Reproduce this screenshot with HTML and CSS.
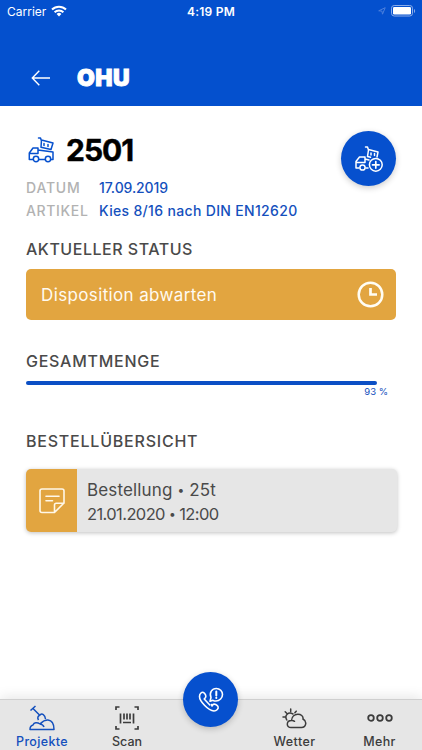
FILE: index.html
```html
<!DOCTYPE html>
<html lang="de">
<head>
<meta charset="utf-8">
<title>OHU</title>
<link rel="stylesheet" href="styles.css">
</head>
<body>
<div class="app">
  <header class="header">
    <div class="statusbar">
      <div class="carrier"><span>Carrier</span>
        <svg width="16" height="12" viewBox="0 0 16 12" fill="none" stroke="#fff" stroke-width="2"><path d="M1 4.500a10 10 0 0 1 14 0M3.600 7.200a6.300 6.300 0 0 1 8.800 0"/><path d="M5.600 9a3.500 3.500 0 0 1 4.800 0L8 11.500z" fill="#fff" stroke="none"/></svg>
      </div>
      <span class="time">4:19 PM</span>
      <div class="power">
        <svg width="8" height="8" viewBox="0 0 8 8" fill="none" stroke="#4c7fdc"><path d="M.7 3.800 7.200.7 4.500 7.200 3.900 4.100z"/></svg>
        <svg width="25" height="12" viewBox="0 0 25 12"><rect x=".5" y=".5" width="21" height="10.500" rx="2.700" fill="none" stroke="#8aacea"/><rect x="2" y="2" width="18" height="7.500" rx="1.300" fill="#fff"/><path d="M23 4v4c1.500-.7 1.500-3.300 0-4z" fill="#8aacea"/></svg>
      </div>
    </div>
    <div class="titlebar">
      <svg class="back" width="20" height="16" viewBox="0 0 20 16" fill="none" stroke="#fff" stroke-width="1.400"><path d="M19 8H1.300M8.300.8 1.300 8l7 7.200"/></svg>
      <span class="logo">OHU</span>
    </div>
  </header>

  <main class="content">
    <section class="summary">
      <div class="info">
        <div class="number">
          <svg width="27" height="26" viewBox="0 0 27 26" fill="none" stroke="#0650ce" stroke-width="1.500" stroke-linejoin="round" stroke-linecap="round"><path d="M10.500 1h2l1 3M13.500 3l11.500 3-2 6.500-10-2.200zM16 6.500v2M20 7.500v2M5 22.500H1.300V16L5 11h5v5.500H2M10 13l15 2v7.500h-2M11 22.500h6"/><circle cx="8" cy="22" r="2.700"/><circle cx="20" cy="22" r="2.700"/></svg>
          <h1>2501</h1>
        </div>
        <dl class="facts">
          <dt class="t-datum">DATUM</dt><dd class="t-date">17.09.2019</dd>
          <dt class="t-artikel">ARTIKEL</dt><dd class="t-kies">Kies 8/16 nach DIN EN12620</dd>
        </dl>
      </div>
      <button class="round add" aria-label="Bestellen">
        <svg width="28" height="26" viewBox="0 0 28 26" fill="none" stroke="#fff" stroke-width="1.500" stroke-linejoin="round" stroke-linecap="round"><path d="M10.500 1h2l1 3M13.500 3.500l9.500 2.500-1 5M13.500 4l-1 6.500 3 .8M16 7v2M19.500 7.500v2M4 22H1v-6.500L4.500 11H10v5.500H2M10 13l4 1M11 22h2"/><circle cx="7.500" cy="21.500" r="2.600"/><circle cx="20.800" cy="18.800" r="6.400"/><path d="M17.500 18.800h6.600M20.800 15.500v6.600" stroke-width="1.700"/></svg>
      </button>
    </section>

    <h2 class="h-status">AKTUELLER STATUS</h2>
    <div class="status"><span>Disposition abwarten</span>
      <svg width="27" height="27" viewBox="0 0 27 27" fill="none" stroke="#fffdf4"><circle cx="13.500" cy="13.500" r="11.800" stroke-width="2.500"/><path d="M13.500 7v6.500H20" stroke-width="2.700"/></svg>
    </div>

    <h2 class="h-total">GESAMTMENGE</h2>
    <div class="progress"><div class="bar" style="width:351px"></div></div>
    <div class="percent">93 %</div>

    <h2 class="h-orders">BESTELLÜBERSICHT</h2>
    <article class="order">
      <div class="note">
        <svg width="26" height="26" viewBox="0 0 26 26" fill="none" stroke="#fff8e8" stroke-width="1.600" stroke-linejoin="round" stroke-linecap="round"><path d="M15 24.500H3a2 2 0 0 1-2-2V3a2 2 0 0 1 2-2h20a2 2 0 0 1 2 2v12l-9.500 9.500V17a1.700 1.700 0 0 1 1.700-1.700H25M7 8.300h13M7 12.800h6.500"/></svg>
      </div>
      <div class="detail"><div class="t-order">Bestellung <i class="dot">•</i> 25t</div><div class="t-when">21.01.2020 <i class="dot">•</i> 12:00</div></div>
    </article>
  </main>

  <nav class="tabs">
    <a class="tab active">
      <svg width="26" height="26" viewBox="0 0 26 26" fill="none" stroke="currentColor" stroke-width="1.500" stroke-linejoin="round"><path d="M1 24.500h24c0-5-1-9-6-9.500-4-.3-6 2-8 4-3-2-6-1.500-7 1-2 .5-3 1.500-3 4.500zM11 19c2 .3 3.500 1.500 4 3M1.500 5.500 6.500 1M4 3.500l7 7M9.500 15c-1.500-2.500-.5-4 1.500-5 2-2 5-.5 5.500 4"/></svg>
      <span class="t-projekte">Projekte</span>
    </a>
    <a class="tab">
      <svg width="24" height="26" viewBox="0 0 24 26" fill="none" stroke="currentColor" stroke-width="1.700"><path d="M1 5V2h3.500M19.500 2H23v3M23 21v3h-3.500M4.500 24H1v-3M5.500 8.500v10M9 8.500v6M12 8.500v6M15 8.500v6M18.500 8.500v10M8 17.500h8"/></svg>
      <span class="t-scan">Scan</span>
    </a>
    <div class="call">
      <button class="round" aria-label="Anrufen">
        <svg width="26" height="26" viewBox="0 0 26 26" fill="none" stroke="#fff" stroke-width="1.600" stroke-linejoin="round" stroke-linecap="round"><path d="M13.500 17.500 14 19l1-1.500c1.500-1 4 .5 5 2 1 2-1.500 4.500-4 4.500C10 23.500 1.500 14 1.500 9.500c0-3 2.500-5 4-4 1.700 1 3 3.500 2 5L6.200 12l5.600 6"/><path d="M13 10.500c-2-5 1-9 5.300-9 3.500 0 6.200 2.700 6.200 6s-3 6.500-6.500 6.500c-1.300 0-2 0-3-.7l-3 1z"/><path d="M18.300 4.500v4M18.300 10.800v.1" stroke-width="2"/></svg>
      </button>
    </div>
    <a class="tab">
      <svg width="25" height="26" viewBox="0 0 25 26" fill="none" stroke="currentColor" stroke-width="1.500" stroke-linecap="round"><path d="M9 22.500c-5 0-5-7 .5-7C10 7 22 8 21 14c4.500 2.500 3 8.500-1.500 8.500H9M9.500 15.500c1-.2 2 0 3 .8M4.800 15C2 10 6.500 6.500 11 9M8.700 4v2.500M1 12h2.300M3.200 6.700l1.500 1.500M14.200 6.200l-1.300 1.600"/></svg>
      <span class="t-wetter">Wetter</span>
    </a>
    <a class="tab">
      <svg width="26" height="26" viewBox="0 0 26 26" fill="none" stroke="currentColor" stroke-width="1.800"><circle cx="4" cy="13" r="2.800"/><circle cx="13" cy="13" r="2.800"/><circle cx="22" cy="13" r="2.800"/></svg>
      <span class="t-mehr">Mehr</span>
    </a>
  </nav>
</div>
</body>
</html>
```
FILE: styles.css
```css
* { box-sizing: border-box; }
body { margin: 0; font-family: Inter, "Open Sans", sans-serif; background: #fff; color: #4a4a4a; }
svg { display: block; flex: none; }
.app { width: 422px; height: 750px; display: flex; flex-direction: column; overflow: hidden; }
.header { height: 106px; background: #0450ce; color: #fff; flex: none; }
.statusbar { height: 22px; padding: 0 7px; display: grid; grid-template-columns: 1fr auto 1fr; align-items: center; font-size: 12px; }
.carrier { display: flex; align-items: center; gap: 5px; }
.time { font-weight: 600; letter-spacing: .2px; }
.power { display: flex; align-items: center; justify-content: flex-end; gap: 5px; margin-right: -1px; }
.titlebar { display: flex; align-items: center; gap: 26px; padding: 41px 0 0 31px; height: 70px; }
.logo { font-size: 23px; line-height: 28px; font-weight: 900; letter-spacing: .5px; -webkit-text-stroke: .9px #fff; }
.content { flex: 1; padding: 24px 26px 0 26px; }
.summary { display: flex; justify-content: space-between; height: 96px; }
.number { display: flex; align-items: center; height: 40px; gap: 11px; padding-left: 2px; }
h1 { margin: 0; font-size: 30px; line-height: 40px; font-weight: 700; color: #000; letter-spacing: -1px; -webkit-text-stroke: .4px #000; }
.facts { display: grid; grid-template-columns: 73px auto; margin: 6px 0 0; font-size: 14px; line-height: 23px; }
.facts dt { color: #b2b2b2; font-weight: 500; }
.facts dd { margin: 0; color: #1450bd; font-weight: 450; white-space: nowrap; }
.t-datum { letter-spacing: .8px; }
.t-artikel { letter-spacing: .65px; }
.facts .t-date { letter-spacing: -.1px; }
.t-kies { letter-spacing: .33px; }
.round { width: 55px; height: 55px; border: 0; border-radius: 50%; background: #0650ce; padding: 0; display: flex; align-items: center; justify-content: center; box-shadow: 0 2px 6px rgba(0,0,0,.2); flex: none; }
.add { margin-top: 1px; }
h2 { margin: 0; font-size: 16px; line-height: 20px; font-weight: 500; white-space: nowrap; }
.h-status { margin-top: 13px; letter-spacing: .52px; }
.status { margin-top: 10px; height: 51px; border-radius: 5px; background: #e2a540; color: #fffaf0; display: flex; justify-content: space-between; align-items: center; padding: 0 12px 0 15px; font-size: 17px; letter-spacing: .37px; }
.h-total { margin-top: 31px; letter-spacing: .75px; }
.progress { height: 4px; margin-top: 10px; }
.bar { height: 4px; border-radius: 2px; background: #0b4fc5; }
.percent { text-align: right; padding: 1px 8px 0 0; font-size: 9.5px; line-height: 12px; color: #1450bd; }
.h-orders { margin-top: 33px; letter-spacing: .78px; }
.order { height: 63px; margin: 18px -1px 0 0; border-radius: 5px; background: #e6e6e6; display: flex; overflow: hidden; box-shadow: 0 1px 4px rgba(0,0,0,.25); }
.note { width: 51px; background: #e2a540; display: flex; align-items: center; justify-content: center; }
.detail { padding: 9px 0 0 10px; font-size: 17px; line-height: 24px; white-space: nowrap; }
.dot { font-style: normal; font-size: 12px; line-height: 1; vertical-align: 2px; }
.t-order { letter-spacing: .15px; }
.t-when { font-size: 16.5px; letter-spacing: -.6px; }
.tabs { height: 51px; flex: none; display: grid; grid-template-columns: 84px 86px 82px 85px 85px; background: #e6e6e6; border-top: 1px solid #cfcfcf; box-shadow: 0 -2px 12px rgba(0,0,0,.1); color: #3c3c3c; }
.tab { display: flex; flex-direction: column; align-items: center; padding-top: 5px; font-size: 12.5px; line-height: 18px; font-weight: 450; }
.tab span { margin-top: 2px; }
.active { color: #1450bd; }
.t-projekte { letter-spacing: .35px; }
.t-wetter { letter-spacing: .45px; }
.t-mehr { letter-spacing: .3px; }
.call { display: flex; justify-content: center; padding-right: 1px; }
.call .round { margin-top: -28px; }
```
